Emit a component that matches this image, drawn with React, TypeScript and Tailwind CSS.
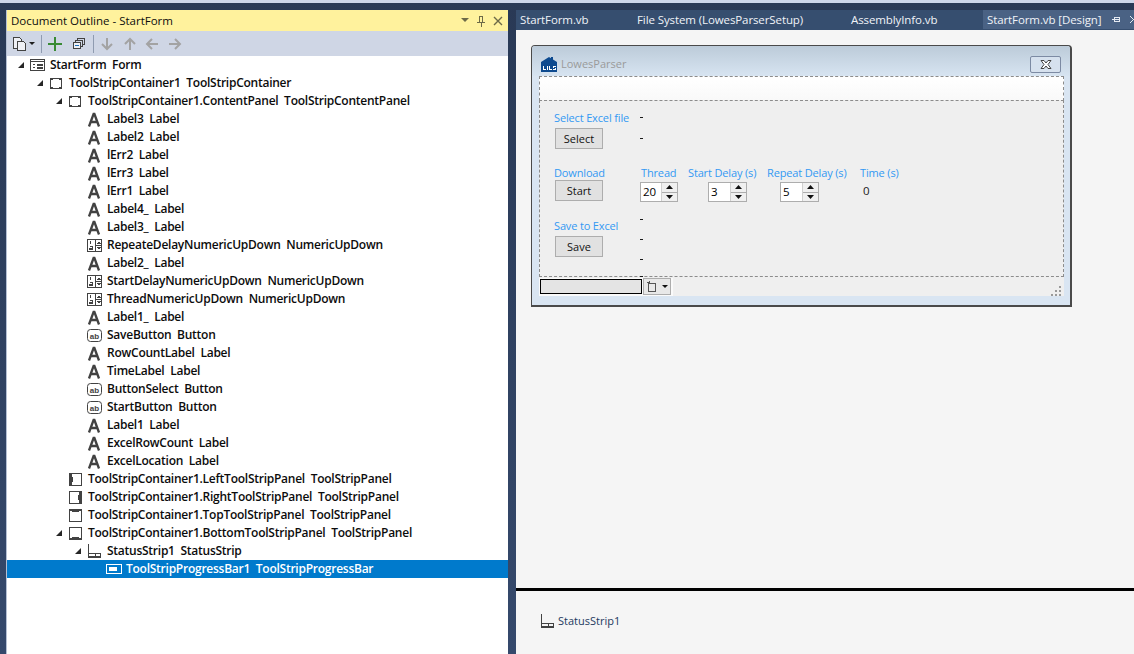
import React from 'react'

type IconKind = 'form' | 'container' | 'label' | 'numeric' | 'button' | 'left' | 'right' | 'top' | 'bottom' | 'status' | 'progress'

type Row = { text: string; level: number; icon: IconKind; open?: boolean; selected?: boolean }

const rows: Row[] = [
  { text: 'StartForm  Form', level: 0, icon: 'form', open: true },
  { text: 'ToolStripContainer1  ToolStripContainer', level: 1, icon: 'container', open: true },
  { text: 'ToolStripContainer1.ContentPanel  ToolStripContentPanel', level: 2, icon: 'container', open: true },
  { text: 'Label3  Label', level: 3, icon: 'label' },
  { text: 'Label2  Label', level: 3, icon: 'label' },
  { text: 'lErr2  Label', level: 3, icon: 'label' },
  { text: 'lErr3  Label', level: 3, icon: 'label' },
  { text: 'lErr1  Label', level: 3, icon: 'label' },
  { text: 'Label4_  Label', level: 3, icon: 'label' },
  { text: 'Label3_  Label', level: 3, icon: 'label' },
  { text: 'RepeateDelayNumericUpDown  NumericUpDown', level: 3, icon: 'numeric' },
  { text: 'Label2_  Label', level: 3, icon: 'label' },
  { text: 'StartDelayNumericUpDown  NumericUpDown', level: 3, icon: 'numeric' },
  { text: 'ThreadNumericUpDown  NumericUpDown', level: 3, icon: 'numeric' },
  { text: 'Label1_  Label', level: 3, icon: 'label' },
  { text: 'SaveButton  Button', level: 3, icon: 'button' },
  { text: 'RowCountLabel  Label', level: 3, icon: 'label' },
  { text: 'TimeLabel  Label', level: 3, icon: 'label' },
  { text: 'ButtonSelect  Button', level: 3, icon: 'button' },
  { text: 'StartButton  Button', level: 3, icon: 'button' },
  { text: 'Label1  Label', level: 3, icon: 'label' },
  { text: 'ExcelRowCount  Label', level: 3, icon: 'label' },
  { text: 'ExcelLocation  Label', level: 3, icon: 'label' },
  { text: 'ToolStripContainer1.LeftToolStripPanel  ToolStripPanel', level: 2, icon: 'left' },
  { text: 'ToolStripContainer1.RightToolStripPanel  ToolStripPanel', level: 2, icon: 'right' },
  { text: 'ToolStripContainer1.TopToolStripPanel  ToolStripPanel', level: 2, icon: 'top' },
  { text: 'ToolStripContainer1.BottomToolStripPanel  ToolStripPanel', level: 2, icon: 'bottom', open: true },
  { text: 'StatusStrip1  StatusStrip', level: 3, icon: 'status', open: true },
  { text: 'ToolStripProgressBar1  ToolStripProgressBar', level: 4, icon: 'progress', selected: true },
]

const indents = ['pl-[12px]', 'pl-[31px]', 'pl-[50px]', 'pl-[69px]', 'pl-[88px]']

const StatusIcon = ({ c }: { c: string }) => (
  <svg width="15" height="16" viewBox="0 0 15 16" fill="none" stroke={c} className="shrink-0" shapeRendering="crispEdges">
    <path d="M1.500 1v14M1 10.500h13M8.500 10v4M13.500 10v4" />
    <path d="M1 13h13v2H1z" fill={c} stroke="none" />
  </svg>
)

const TreeIcon = ({ kind, light }: { kind: IconKind; light?: boolean }) => {
  const c = light ? '#ffffff' : '#424242'
  if (kind === 'status') return <div className="w-[16px] shrink-0"><StatusIcon c={c} /></div>
  return (
    <svg width="16" height="16" viewBox="0 0 16 16" className="shrink-0" fill="none" stroke={c} strokeWidth="1" shapeRendering="crispEdges">
      {kind === 'form' && (
        <>
          <rect x="0.500" y="2.500" width="14" height="11" />
          <path d="M1 4h13v1H1z" fill={c} stroke="none" />
          <path d="M3 7.500h2M3 10.500h2" />
          <path d="M7.500 7.500h5v1h-5zM7.500 10.500h5v1h-5z" />
        </>
      )}
      {kind === 'container' && (
        <>
          <rect x="1.500" y="3.500" width="11" height="10" />
          <path d="M1 3h3v2H1zM10 3h3v2h-3zM1 12h3v2H1zM10 12h3v2h-3zM5 13h4v1H5z" fill={c} stroke="none" />
        </>
      )}
      {kind === 'label' && <path d="M2 15.500 6.600 3h.8L12 15.500M4 11h6" strokeWidth="2.300" shapeRendering="auto" />}
      {kind === 'numeric' && (
        <>
          <rect x="0.500" y="2.500" width="14" height="12" />
          <path d="M8.500 3v11M9 8.500h5" />
          <path d="M10 7h4l-2-2.500zM10 10h4l-2 2.500z" fill={c} stroke="none" />
          <path d="M3.500 4v3M2.500 4.500h1M2.500 9.500h3v1.500h-3v1.500h3" />
        </>
      )}
      {kind === 'button' && (
        <>
          <rect x="0.500" y="2.500" width="14" height="12" rx="3" shapeRendering="auto" />
          <text x="7.500" y="11.500" textAnchor="middle" fontSize="8" fontWeight="700" fill={c} stroke="none" fontFamily="Liberation Sans, sans-serif">ab</text>
        </>
      )}
      {kind === 'left' && (
        <>
          <rect x="1.500" y="2.500" width="12" height="12" />
          <path d="M1 2h3v13H1zM4 6h1v5H4z" fill={c} stroke="none" />
        </>
      )}
      {kind === 'right' && (
        <>
          <rect x="1.500" y="2.500" width="12" height="12" />
          <path d="M11 2h3v13h-3zM10 6h1v5h-1z" fill={c} stroke="none" />
        </>
      )}
      {kind === 'top' && (
        <>
          <rect x="1.500" y="2.500" width="12" height="12" />
          <path d="M1 2h13v2H1zM4 4h7v1H4z" fill={c} stroke="none" />
        </>
      )}
      {kind === 'bottom' && (
        <>
          <rect x="1.500" y="2.500" width="12" height="12" />
          <path d="M1 13h13v2H1zM4 12h7v1H4z" fill={c} stroke="none" />
        </>
      )}
      {kind === 'progress' && (
        <>
          <rect x="0.500" y="3.500" width="15" height="9" />
          <path d="M3 6h8v4H3z" fill={c} stroke="none" />
        </>
      )}
    </svg>
  )
}

const Expander = () => (
  <svg width="8" height="8" viewBox="0 0 8 8" className="-ml-[2px] shrink-0">
    <path d="M7 1v6H1z" fill="#262626" />
  </svg>
)

const TreeRow = ({ row }: { row: Row }) => (
  <div className={`flex h-[18px] items-center ${indents[row.level]} ${row.selected ? 'bg-[#007acc] text-white' : 'text-[#0c0c0c]'}`}>
    <div className="flex w-[11px] shrink-0 items-center justify-start">{row.open && <Expander />}</div>
    <TreeIcon kind={row.icon} light={row.selected} />
    <span className="ml-[4px] whitespace-pre text-[12px] font-semibold tracking-[-0.25px]">{row.text}</span>
  </div>
)

const Sep = ({ className }: { className: string }) => <div className={`h-[18px] w-px bg-[#8f9bb0] ${className}`} />

const ArrowBtn = ({ d }: { d: string }) => (
  <svg width="16" height="16" viewBox="0 0 16 16" fill="none" stroke="#a3a3a3" strokeWidth="2" className="mr-[6.5px]">
    <path d={d} />
  </svg>
)

const Toolbar = () => (
  <div className="flex h-[25px] items-center bg-[#cfd6e5] pl-[5px]">
    <svg width="16" height="16" viewBox="0 0 16 16" fill="none" stroke="#424242" shapeRendering="crispEdges">
      <path d="M1.500 1.500h6l2 2v9h-8z" fill="#eef0f5" />
      <path d="M5.500 5.500h6l2 2v7h-8z" fill="#eef0f5" />
    </svg>
    <svg width="6" height="4" viewBox="0 0 6 4" className="ml-[1px]">
      <path d="M0 0h6L3 3z" fill="#1e1e1e" />
    </svg>
    <Sep className="ml-[6px] mr-[5px]" />
    <svg width="16" height="16" viewBox="0 0 16 16">
      <path d="M7 1h2v6h6v2H9v6H7V9H1V7h6z" fill="#388a34" />
    </svg>
    <svg width="14" height="14" viewBox="0 0 14 14" fill="none" stroke="#424242" className="ml-[9px]" shapeRendering="crispEdges">
      <path d="M5.500 3.500v-2h7v6h-2" />
      <path d="M3.500 5.500v-2h7v6h-2" />
      <rect x="1.500" y="5.500" width="7" height="6" fill="#eef0f5" />
      <path d="M3 8.500h4" stroke="#1e6fb8" />
    </svg>
    <Sep className="ml-[7px] mr-[5px]" />
    <ArrowBtn d="M8 2v11M3 8l5 5 5-5" />
    <ArrowBtn d="M8 14V3M3 8l5-5 5 5" />
    <ArrowBtn d="M14 8H3M8 3 3 8l5 5" />
    <ArrowBtn d="M2 8h11M8 3l5 5-5 5" />
  </div>
)

const OutlinePanel = () => (
  <div className="flex w-[502px] shrink-0 flex-col border-l border-[#b5c0d4]">
    <div className="flex h-[21px] items-center justify-between bg-[#fff29d] pl-[4px] pr-[5px] text-[11.5px] text-[#0d0d0d]">
      <span>Document Outline - StartForm</span>
      <div className="flex items-center gap-[7px]">
        <svg width="8" height="5" viewBox="0 0 8 5"><path d="M0 0h8L4 4z" fill="#6d6a48" /></svg>
        <svg width="10" height="12" viewBox="0 0 10 12" fill="none" stroke="#6d6a48" shapeRendering="crispEdges"><path d="M3.500 1.500v6h3v-6zM1 7.500h8M5 8v4M3 1.500h4" /></svg>
        <svg width="10" height="10" viewBox="0 0 10 10" fill="none" stroke="#6d6a48" strokeWidth="1.400"><path d="M1 1l8 8M9 1 1 9" /></svg>
      </div>
    </div>
    <Toolbar />
    <div className="min-h-0 flex-1 bg-white">
      {rows.map((r) => <TreeRow key={r.text} row={r} />)}
    </div>
  </div>
)

const Tab = ({ label, className }: { label: string; className: string }) => (
  <div className={`flex h-[19px] shrink-0 items-center whitespace-nowrap text-[11.5px] tracking-[-0.1px] text-[#f0f3f8] ${className}`}>{label}</div>
)

const Tabs = () => (
  <div className="flex h-[20px] shrink-0 items-start bg-[#364e6f]">
    <Tab label="StartForm.vb" className="ml-[4px] w-[117px]" />
    <Tab label="File System (LowesParserSetup)" className="w-[214px]" />
    <Tab label="AssemblyInfo.vb" className="w-[132px]" />
    <div className="flex h-[19px] flex-1 items-center overflow-hidden bg-[#4a6284] pl-[4px] text-[11.5px] tracking-[-0.1px] text-[#f0f3f8]">
      <span className="whitespace-nowrap">StartForm.vb [Design]</span>
      <svg width="9" height="9" viewBox="0 0 9 9" fill="none" stroke="#e4e9f1" className="ml-[10px] shrink-0" shapeRendering="crispEdges"><path d="M0 4.500h2M2.500 2v5M2.500 2.500h5v4h-5M2.500 4.500h5" /></svg>
      <svg width="8" height="8" viewBox="0 0 8 8" fill="none" stroke="#e4e9f1" className="ml-[9px] shrink-0"><path d="M0 0l7 7M7 0 0 7" /></svg>
    </div>
  </div>
)

const FieldLabel = ({ children, className = '' }: { children: React.ReactNode; className?: string }) => (
  <div className={`whitespace-nowrap text-[11px] leading-[14px] tracking-[-0.15px] text-[#3399f3] ${className}`}>{children}</div>
)

const FormButton = ({ children }: { children: React.ReactNode }) => (
  <div className="flex h-[21px] w-[48px] items-center justify-center border border-[#adadad] bg-[#e1e1e1] pt-px text-[11px] text-[#111]">{children}</div>
)

const Dash = ({ className = '' }: { className?: string }) => <div className={`h-px w-[3px] bg-[#1a1a1a] ${className}`} />

const Spinner = ({ value, w }: { value: string; w: string }) => (
  <div className={`-ml-px flex h-[20px] items-stretch border border-[#adadad] bg-white ${w}`}>
    <div className="flex-1 pl-[2px] text-[11.5px] leading-[18px] text-black">{value}</div>
    <div className="flex w-[16px] flex-col border-l border-[#d0d0d0] bg-[#f0f0f0]">
      <div className="flex flex-1 items-center justify-center border-b border-[#adadad]">
        <svg width="7" height="4" viewBox="0 0 7 4"><path d="M3.500 0 7 4H0z" fill="#111" /></svg>
      </div>
      <div className="flex flex-1 items-center justify-center">
        <svg width="7" height="4" viewBox="0 0 7 4"><path d="M0 0h7L3.500 4z" fill="#111" /></svg>
      </div>
    </div>
  </div>
)

const LowesIcon = () => (
  <svg width="16" height="16" viewBox="0 0 16 16">
    <path d="M0 16V6l8-5 2 1.300V1h2v2.500L16 6v10z" fill="#0d4a8f" />
    <path d="M2 10h1v3h2v1H2zM6 10h1v4H6zM8 10h1v3h2v1H8zM12 10h3v1h-2v1h2v2h-3v-1h2v-1h-2z" fill="#fff" />
  </svg>
)

const Grip = () => (
  <div className="grid grid-cols-3 gap-[2px]">
    <span /><span /><span className="size-[2px] bg-[#9a9a9a]" />
    <span /><span className="size-[2px] bg-[#9a9a9a]" /><span className="size-[2px] bg-[#9a9a9a]" />
    <span className="size-[2px] bg-[#9a9a9a]" /><span className="size-[2px] bg-[#9a9a9a]" /><span className="size-[2px] bg-[#9a9a9a]" />
  </div>
)

const DesignForm = () => (
  <div className="flex h-[262px] w-[541px] flex-col rounded-t-[4px] border-t border-r-2 border-b-2 border-l border-[#4a4a4a] bg-[#d9e5f2]">
    <div className="flex h-[30px] shrink-0 items-center justify-between rounded-t-[3px] bg-gradient-to-b from-[#bccbd9] to-[#d7e4f1] pl-[9px] pr-[9px] pt-[6px]">
      <div className="flex items-center gap-[4px]">
        <LowesIcon />
        <span className="text-[11px] text-[#9a9a9a]">LowesParser</span>
      </div>
      <div className="flex h-[17px] w-[31px] items-center justify-center rounded-[2px] border border-[#7c8aa3] bg-[#d6e1ee]">
        <svg width="12" height="9" viewBox="0 0 12 9" fill="#fff" stroke="#444"><path d="M1 .5h3L6 3 8 .5h3L8 4.500l3 4H8L6 6 4 8.500H1l3-4z" /></svg>
      </div>
    </div>
    <div className="ml-[7px] mr-[6px] flex min-h-0 flex-1 flex-col pb-[9px]">
      <div className="h-[25px] shrink-0 border border-dashed border-[#8c8c8c] bg-gradient-to-b from-[#ffffff] to-[#f9f9f9]" />
      <div className="-mt-px flex h-[177px] shrink-0 flex-col border border-dashed border-[#8c8c8c] bg-[#efefef] pl-[15px] pt-[10px]">
        <div className="flex items-start">
          <FieldLabel className="-ml-px w-[86px]">Select Excel file</FieldLabel>
          <Dash className="mt-[6px]" />
        </div>
        <div className="mt-[3px] flex items-center">
          <FormButton>Select</FormButton>
          <Dash className="ml-[37px]" />
        </div>
        <div className="mt-[17px] flex">
          <div className="w-[86px]">
            <FieldLabel className="-ml-px">Download</FieldLabel>
            <FormButton>Start</FormButton>
          </div>
          <div className="w-[47px]">
            <FieldLabel>Thread</FieldLabel>
            <div className="mt-[2px]"><Spinner value="20" w="w-[38px]" /></div>
          </div>
          <div className="w-[79px]">
            <FieldLabel>Start Delay (s)</FieldLabel>
            <div className="mt-[2px] pl-[21px]"><Spinner value="3" w="w-[39px]" /></div>
          </div>
          <div className="w-[93px]">
            <FieldLabel>Repeat Delay (s)</FieldLabel>
            <div className="mt-[2px] pl-[14px]"><Spinner value="5" w="w-[39px]" /></div>
          </div>
          <div>
            <FieldLabel>Time (s)</FieldLabel>
            <div className="mt-[3px] pl-[3px] text-[11.5px] leading-[16px] text-[#1a1a1a]">0</div>
          </div>
        </div>
        <div className="mt-[15px] flex">
          <div className="w-[85px]">
            <FieldLabel className="-ml-px mt-[2px]">Save to Excel</FieldLabel>
            <div className="mt-[3px]"><FormButton>Save</FormButton></div>
          </div>
          <div className="flex flex-col gap-[19px] pt-[2px]">
            <Dash />
            <Dash />
            <Dash />
            <Dash className="-mt-[3px]" />
          </div>
        </div>
      </div>
      <div className="flex h-[19px] shrink-0 items-center justify-between bg-[#efefef]">
        <div className="flex h-[18px] w-[134px] items-center bg-[#fafafa] pl-px">
          <div className="h-[15px] w-[102px] border border-black bg-[#e4e4e4]" />
          <div className="ml-px flex h-[17px] w-[28px] items-center gap-[4px] border border-[#adadad] bg-[#e8e8e8] pl-[2px]">
            <svg width="12" height="12" viewBox="0 0 12 12" fill="none" stroke="#555" shapeRendering="crispEdges"><path d="M2.500 2.500h7v8h-7zM1 1.500h3M3.500 0v3" /></svg>
            <svg width="6" height="4" viewBox="0 0 6 4"><path d="M0 0h6L3 3z" fill="#111" /></svg>
          </div>
        </div>
        <div className="pr-[3px] pt-[8px]"><Grip /></div>
      </div>
    </div>
  </div>
)

const DesignPanel = () => (
  <div className="flex min-w-0 flex-1 flex-col">
    <Tabs />
    <div className="h-[558px] shrink-0 bg-[#f5f5f5] pl-[15px] pt-[15px]">
      <DesignForm />
    </div>
    <div className="h-[3px] shrink-0 bg-black" />
    <div className="flex flex-1 items-start bg-[#f5f5f5] pl-[24px] pt-[22px]">
      <StatusIcon c="#424242" />
      <span className="ml-[3px] text-[11px] leading-[16px] text-[#1e3a5f]">StatusStrip1</span>
    </div>
  </div>
)

export default function App() {
  return (
    <div className="flex h-[654px] w-[1134px] flex-col overflow-hidden bg-gradient-to-b from-[#293955] to-[#35496c] font-['Open_Sans','Noto_Sans',sans-serif]">
      <div className="h-[3px] shrink-0 bg-[#ccd5e8]" />
      <div className="flex min-h-0 flex-1 pl-[6px] pt-[7px]">
        <OutlinePanel />
        <div className="w-[8px] shrink-0" />
        <DesignPanel />
      </div>
    </div>
  )
}
